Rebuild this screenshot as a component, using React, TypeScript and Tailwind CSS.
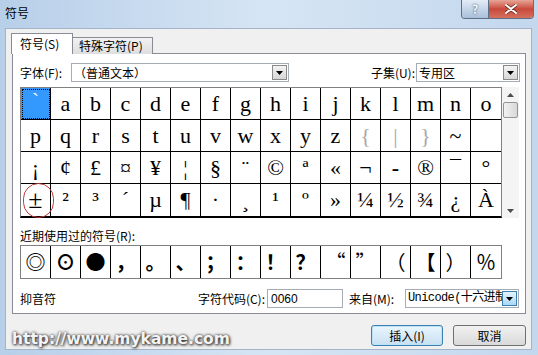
const rows: string[][] = [
  ['`', 'a', 'b', 'c', 'd', 'e', 'f', 'g', 'h', 'i', 'j', 'k', 'l', 'm', 'n', 'o'],
  ['p', 'q', 'r', 's', 't', 'u', 'v', 'w', 'x', 'y', 'z', '{', '|', '}', '~', ''],
  ['¡', '¢', '£', '¤', '¥', '¦', '§', '¨', '©', 'ª', '«', '¬', '-', '®', '¯', '°'],
  ['±', '²', '³', '´', 'µ', '¶', '·', '¸', '¹', 'º', '»', '¼', '½', '¾', '¿', 'À'],
];

const recent = ['◎', '⊙', '●', '，', '。', '、', '；', '：', '！', '？', '“', '”', '（', '【', '）', '％'];

const light = ['{', '|', '}'];

const Arrow = ({ active }: { active?: boolean }) => (
  <div
    className={`w-[15px] h-[15px] shrink-0 flex items-center justify-center border ${
      active ? 'border-[#3c7fb1] bg-gradient-to-b from-[#e5f4fc] to-[#a9d8f5]' : 'border-[#8a8a8a] bg-gradient-to-b from-[#f4f4f4] to-[#d6d6d6]'
    }`}
  >
    <svg width="7" height="4" viewBox="0 0 7 4">
      <path d="M0 0H7L3.5 4Z" fill="#000" />
    </svg>
  </div>
);

const Select = ({ text, width, mono }: { text: string; width: string; mono?: boolean }) => (
  <div className={`${width} h-[19px] flex items-center bg-white border border-[#a5acb5] pl-[2px] pr-[1px]`}>
    <span
      className={`flex-1 min-w-0 whitespace-nowrap overflow-hidden text-[12px] leading-[17px] ${
        mono ? "font-['Liberation_Mono','Noto_Sans_CJK_SC',monospace] tracking-[-0.6px]" : ''
      }`}
    >
      {text}
    </span>
    <Arrow active={mono} />
  </div>
);

export default function App() {
  return (
    <div className="w-[538px] h-[355px] relative overflow-hidden bg-gradient-to-r from-[#b8cfe9] via-[#d6e5f4] to-[#c3d7ed] font-['Noto_Sans_CJK_SC',sans-serif] text-[12px] text-black">
      {/* Title bar */}
      <div className="h-[28px] flex items-start">
        <div className="pl-[5px] pt-[4px] text-[12px] text-black">符号</div>
        <div className="ml-auto mr-[4px] flex border border-t-0 border-[#5f6f86] rounded-b-[4px] overflow-hidden">
          <div className="w-[27px] h-[18px] flex items-center justify-center bg-gradient-to-b from-[#e3ecf7] to-[#a9bfd9] border-r border-[#5f6f86] text-[12px] font-bold text-[#f4f7fb] [text-shadow:0_0_2px_#2d3f58]">
            ?
          </div>
          <div className="w-[44px] h-[18px] flex items-center justify-center bg-gradient-to-b from-[#e6a497] via-[#c9493b] to-[#d5705f]">
            <svg width="12" height="10" viewBox="0 0 12 10">
              <path d="M1 1L11 9M11 1L1 9" stroke="#6b1e16" strokeWidth="3.4" strokeLinecap="round" />
              <path d="M1 1L11 9M11 1L1 9" stroke="#fff" strokeWidth="2" strokeLinecap="round" />
            </svg>
          </div>
        </div>
      </div>

      {/* Content area */}
      <div className="absolute left-[5px] right-[6px] top-[28px] bottom-[5px] bg-[#f0f0f0] border border-[#a3b4c9] flex flex-col">
        {/* Tabs */}
        <div className="flex items-end pl-[5px] mt-[4px] h-[21px] relative z-10">
          <div className="w-[62px] h-[21px] bg-white border border-b-0 border-[#898c95] flex items-center pl-[8px] pb-[1px]">
            符号(S)
          </div>
          <div className="w-[80px] h-[17px] bg-gradient-to-b from-[#f2f2f2] to-[#dedede] border border-l-0 border-b-0 border-[#898c95] flex items-center pl-[6px]">
            特殊字符(P)
          </div>
        </div>

        {/* Tab panel */}
        <div className="ml-[6px] mr-[5px] -mt-[1px] h-[261px] bg-white border border-[#898c95] pl-[7px] pr-[5px] pt-[9px]">
          <div className="flex items-center h-[19px]">
            <span className="w-[51px]">字体(F):</span>
            <Select text="（普通文本）" width="w-[218px]" />
            <span className="ml-auto mr-[1px]">子集(U):</span>
            <Select text="专用区" width="w-[104px]" />
          </div>

          {/* Character grid */}
          <div className="flex mt-[5px]">
            <div className="relative border border-[#808080] border-b-2 border-b-black">
              {rows.map((row, r) => (
                <div key={r} className="flex">
                  {row.map((ch, c) => {
                    const selected = r === 0 && c === 0;
                    return (
                      <div
                        key={c}
                        className={`w-[30px] h-[32px] flex items-center justify-center font-['Liberation_Serif',serif] leading-none ${
                          ch === '±' ? 'text-[26px]' : 'text-[22px]'
                        } ${c < 15 ? 'border-r border-r-black' : ''} ${r < 3 ? 'border-b border-b-black' : ''} ${
                          selected
                            ? 'bg-[#3399ff] text-white items-start pt-[2px] outline-1 outline-dotted outline-black -outline-offset-2'
                            : ''
                        } ${light.includes(ch) ? 'text-[#a8a8a8]' : ''} ${ch === '-' ? 'font-bold' : ''}`}
                      >
                        {ch}
                      </div>
                    );
                  })}
                </div>
              ))}
              {/* red mark */}
              <div className="absolute left-[2px] top-[95px] w-[31px] h-[35px] rounded-full border border-[#c33a3a]" />
            </div>
            {/* Scrollbar */}
            <div className="w-[17px] h-[131px] bg-[#f4f4f4] flex flex-col items-center">
              <div className="h-[15px] flex items-center">
                <svg width="7" height="4" viewBox="0 0 7 4">
                  <path d="M0 4H7L3.5 0Z" fill="#4d4d4d" />
                </svg>
              </div>
              <div className="w-[15px] h-[16px] rounded-[2px] border border-[#959595] bg-gradient-to-r from-[#f2f2f2] to-[#d8d8d8]" />
              <div className="flex-1" />
              <div className="h-[15px] flex items-center">
                <svg width="7" height="4" viewBox="0 0 7 4">
                  <path d="M0 0H7L3.5 4Z" fill="#4d4d4d" />
                </svg>
              </div>
            </div>
          </div>

          <div className="mt-[10px] h-[16px] leading-[16px]">近期使用过的符号(R):</div>

          {/* Recently used */}
          <div className="mt-[1px] flex w-fit border border-[#808080]">
            {recent.map((ch, i) => (
              <div
                key={i}
                className={`w-[30px] h-[32px] flex items-center justify-center font-['Noto_Sans_CJK_SC',sans-serif] text-[20px] leading-none ${
                  i < 10 ? 'font-bold' : ''
                } ${i < 15 ? 'border-r border-r-black' : ''}`}
              >
                {ch}
              </div>
            ))}
          </div>

          {/* Code row */}
          <div className="mt-[10px] flex items-center h-[19px]">
            <span className="w-[153px]">抑音符</span>
            <span className="w-[94px] text-right pr-[2px]">字符代码(C):</span>
            <div className="w-[76px] h-[19px] bg-white border border-[#a5acb5] flex items-center pl-[3px] font-['Liberation_Sans',sans-serif] text-[12px]">
              0060
            </div>
            <span className="ml-[6px] w-[56px]">来自(M):</span>
            <Select text="Unicode(十六进制)" width="w-[114px]" mono />
          </div>
        </div>

        {/* Buttons */}
        <div className="flex justify-end gap-[10px] pr-[5px] mt-[11px]">
          <div className="w-[72px] h-[21px] rounded-[3px] border border-[#3c7fb1] bg-gradient-to-b from-[#eaf6fd] to-[#c8e0f2] shadow-[inset_0_0_0_1px_#bde3f8] flex items-center justify-center">
            插入(I)
          </div>
          <div className="w-[73px] h-[21px] rounded-[3px] border border-[#707070] bg-gradient-to-b from-[#f2f2f2] to-[#d9d9d9] flex items-center justify-center">
            取消
          </div>
        </div>
      </div>

      {/* Watermark */}
      <div className="absolute left-[12px] top-[328px] font-['DejaVu_Sans',sans-serif] font-bold text-[15.5px] text-[#f4f4f4] [text-shadow:0_0_3px_#333,1px_1px_3px_#222]">
        http://www.mykame.com
      </div>
    </div>
  );
}
